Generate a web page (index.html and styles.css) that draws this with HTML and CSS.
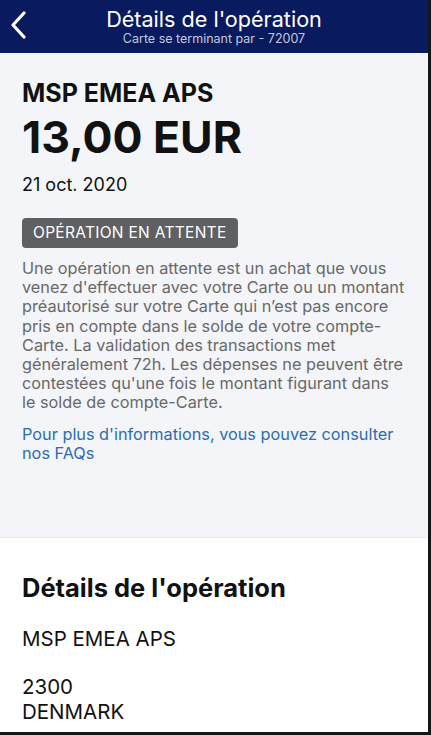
FILE: index.html
```html
<!DOCTYPE html>
<html lang="fr">
<head>
    <meta charset="UTF-8">
    <meta name="viewport" content="width=device-width, initial-scale=1.0">
    <title>Détails de l'opération</title>
    <link rel="stylesheet" href="styles.css">
</head>
<body>
    <div class="screen">
        <div class="topbar">
            <button class="back" aria-label="Retour">
                <svg width="18" height="28" viewBox="0 0 18 28">
                    <path d="M15 2 L4 14 L15 26" fill="none" stroke="#ffffff" stroke-width="3.2" stroke-linecap="round" stroke-linejoin="round"/>
                </svg>
            </button>
            <div class="topbar-title">
                <div class="title">Détails de l'opération</div>
                <div class="subtitle">Carte se terminant par - 72007</div>
            </div>
        </div>

        <div class="summary">
            <div class="merchant">MSP EMEA APS</div>
            <div class="amount">13,00 EUR</div>
            <div class="date">21 oct. 2020</div>
            <span class="badge">OPÉRATION EN ATTENTE</span>
            <p class="info">Une opération en attente est un achat que vous venez d'effectuer avec votre Carte ou un montant préautorisé sur votre Carte qui n’est pas encore pris en compte dans le solde de votre compte-Carte. La validation des transactions met généralement 72h. Les dépenses ne peuvent être contestées qu'une fois le montant figurant dans le&nbsp;solde de compte-Carte.</p>
            <a class="faq" href="#">Pour plus d'informations, vous pouvez consulter nos FAQs</a>
        </div>

        <div class="details">
            <h2>Détails de l'opération</h2>
            <div class="line">MSP EMEA APS</div>
            <div class="line">2300<br>DENMARK</div>
        </div>
    </div>
</body>
</html>
```

FILE: styles.css
```css
body {
    margin: 0;
    padding: 0;
    background-color: #161616;
    font-family: Inter, "Noto Sans", sans-serif;
    color: #111111;
}
.screen {
    width: 428px;
    height: 732px;
    overflow: hidden;
    background-color: #ffffff;
}
.topbar {
    position: relative;
    height: 53px;
    box-sizing: border-box;
    padding-top: 7px;
    background-color: #0a1a5e;
    color: #ffffff;
    display: flex;
    justify-content: center;
    align-items: flex-start;
}
.back {
    position: absolute;
    left: 9px;
    top: 11px;
    padding: 0;
    border: none;
    background: none;
}
.topbar-title {
    text-align: center;
}
.title {
    font-size: 21.6px;
    line-height: 24px;
}
.subtitle {
    margin-top: 1px;
    font-size: 12.5px;
    line-height: 14px;
    color: #c4c9dd;
}
.summary {
    background-color: #f4f5f8;
    padding: 25px 21px 0 22px;
    height: 459px;
    border-bottom: 1px solid #ececef;
}
.merchant {
    font-size: 25px;
    font-weight: 700;
    line-height: 30px;
}
.amount {
    margin-top: 4px;
    font-size: 44.5px;
    font-weight: 700;
    line-height: 50px;
}
.date {
    font-size: 18px;
    line-height: 22px;
    margin-top: 12px;
}
.badge {
    display: inline-block;
    margin-top: 22px;
    padding: 0 11px;
    height: 30px;
    line-height: 30px;
    background-color: #5e6064;
    color: #ffffff;
    border-radius: 4px;
    font-size: 15.5px;
    letter-spacing: 0.3px;
}
.info {
    margin: 11px 0 0 0;
    font-size: 16.3px;
    line-height: 19.2px;
    color: #686868;
}
.faq {
    display: block;
    margin-top: 12px;
    font-size: 16.3px;
    line-height: 19.2px;
    color: #2d6bb0;
    text-decoration: none;
}
.details {
    padding: 35px 22px 0 22px;
}
.details h2 {
    margin: 0;
    font-size: 25.5px;
    line-height: 30px;
    font-weight: 700;
}
.line {
    margin-top: 23px;
    font-size: 20.5px;
    line-height: 25px;
}
```
